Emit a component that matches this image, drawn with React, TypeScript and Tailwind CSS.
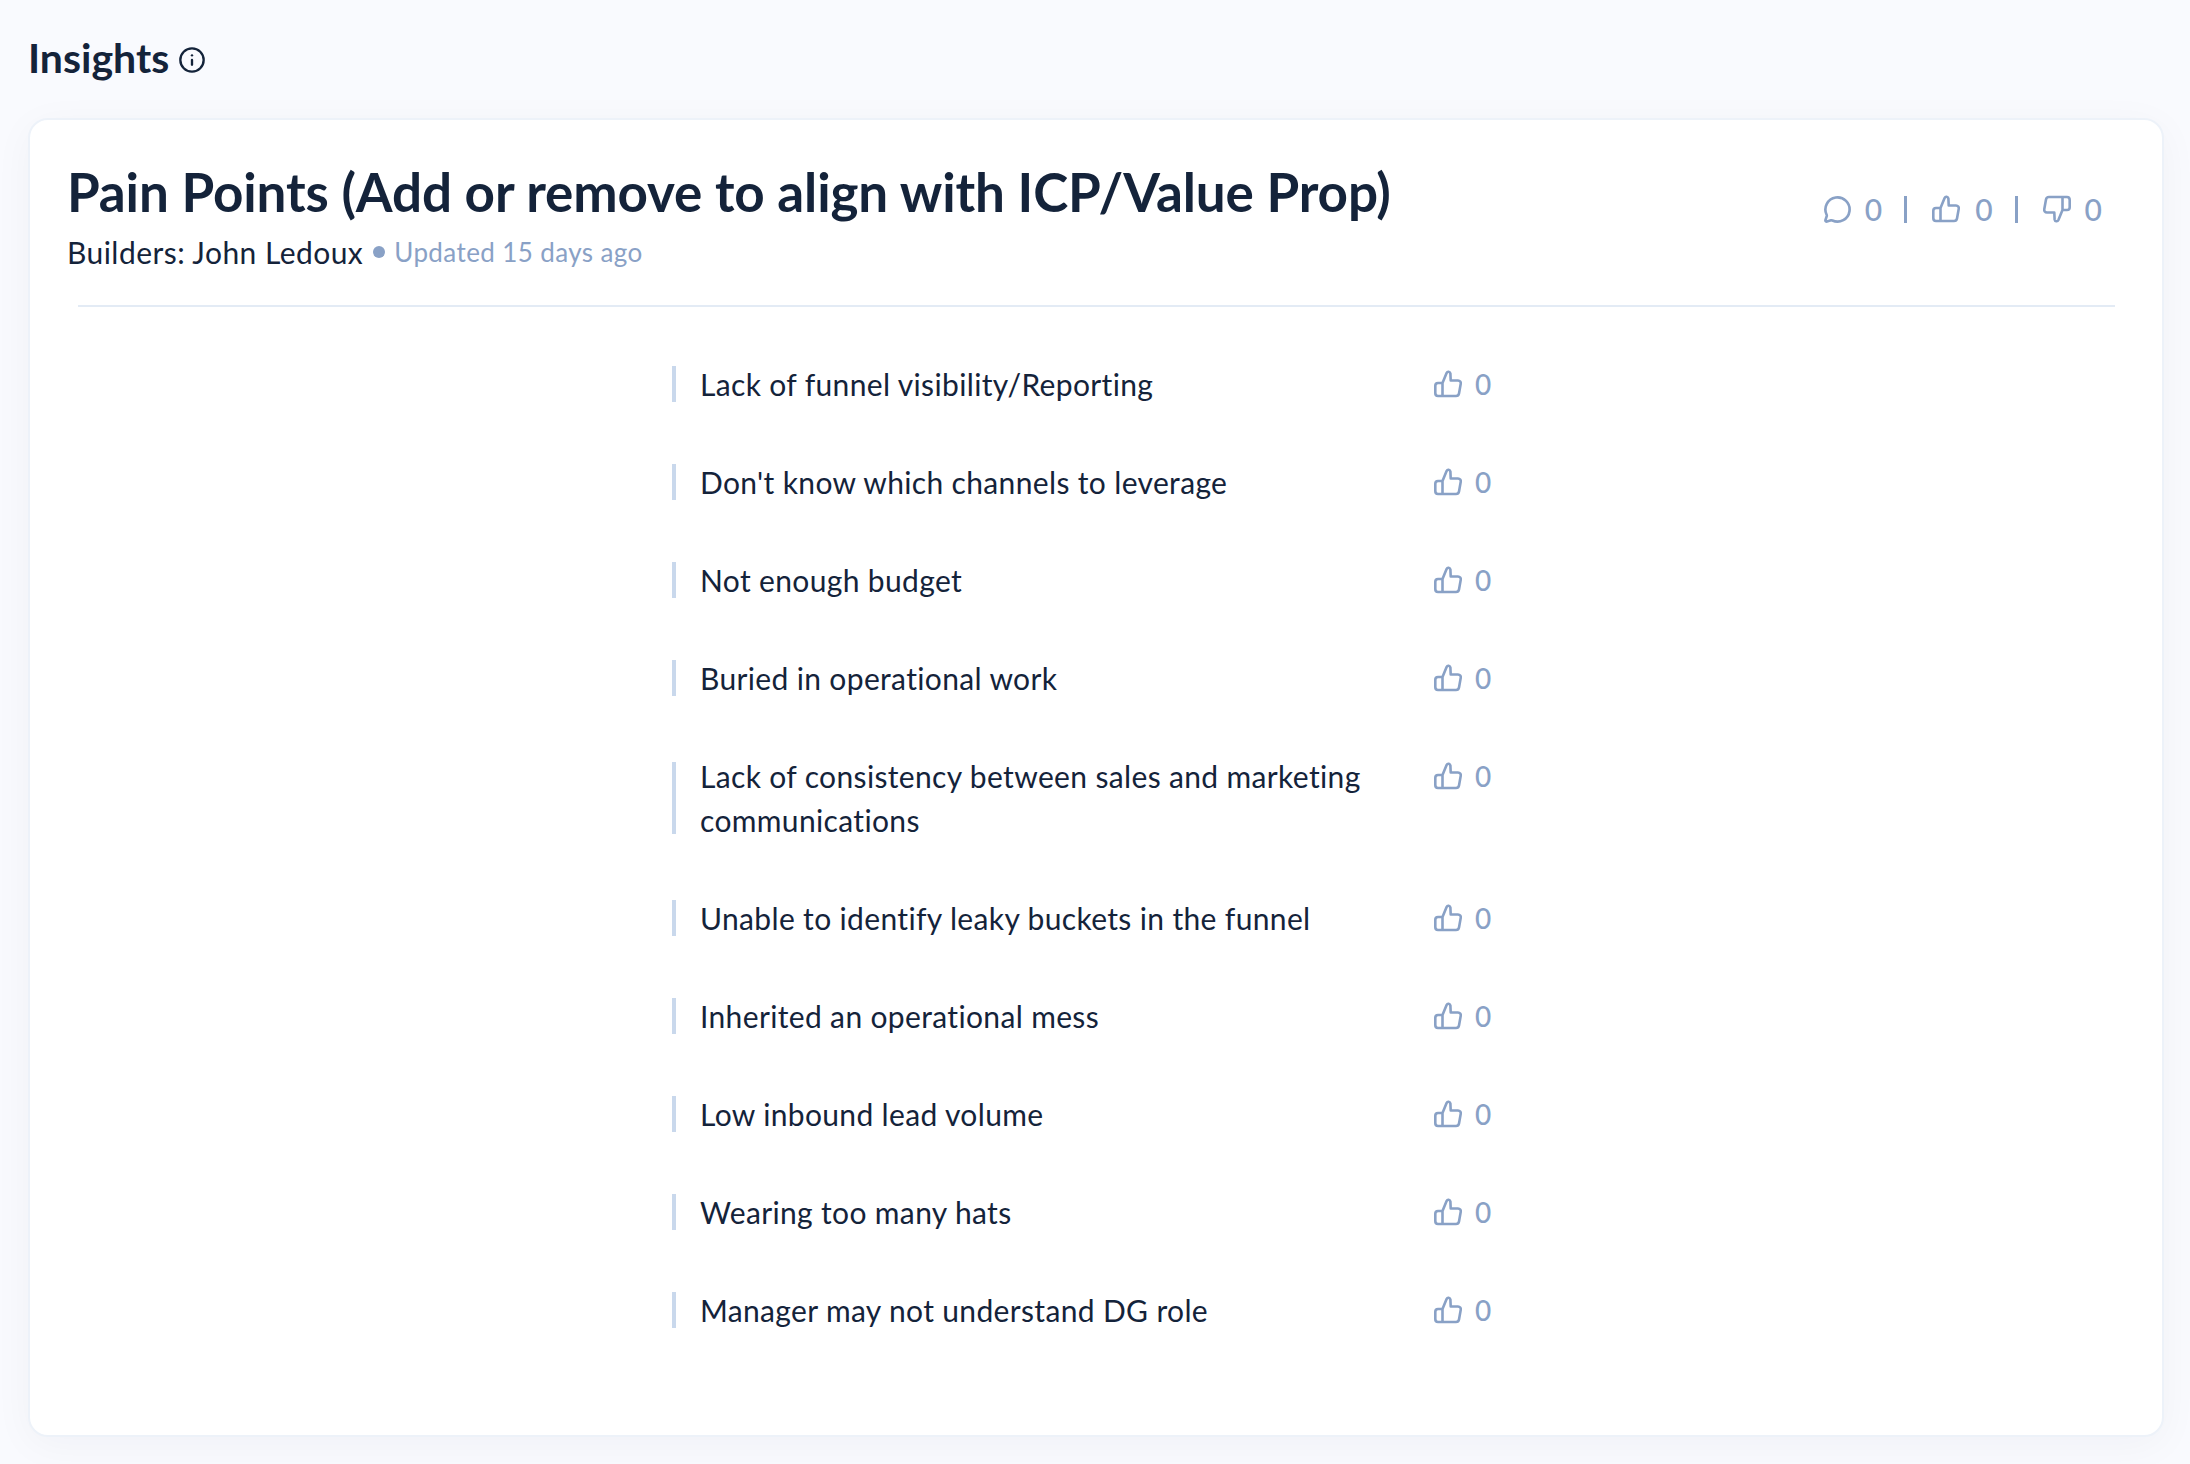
import React from "react";
import { MessageCircle, Info } from "lucide-react";

const items: { t: string; tall?: boolean }[] = [
  { t: "Lack of funnel visibility/Reporting" },
  { t: "Don't know which channels to leverage" },
  { t: "Not enough budget" },
  { t: "Buried in operational work" },
  { t: "Lack of consistency between sales and marketing communications", tall: true },
  { t: "Unable to identify leaky buckets in the funnel" },
  { t: "Inherited an operational mess" },
  { t: "Low inbound lead volume" },
  { t: "Wearing too many hats" },
  { t: "Manager may not understand DG role" },
];

function Thumb({ className }: { className?: string }) {
  return (
    <svg width="28" height="28" viewBox="0 0 28 28" fill="none" stroke="currentColor" strokeWidth="2.6" strokeLinecap="round" strokeLinejoin="round" className={className}>
      <path d="M8.5 13 L12.6 3 C13.5 1 16 1.4 16.4 3.6 L16.7 10.5 H24 C26 10.5 27.1 12 26.7 14 L25 23.5 C24.7 25.2 23.5 26 22 26 H4 C2.2 26 1.3 24.8 1.3 23 V15.8 C1.3 14 2.2 13 4 13 H8.5 V26" />
    </svg>
  );
}

function Row({ t, tall }: { t: string; tall?: boolean }) {
  return (
    <div className="flex w-[848px] items-start">
      <div className="flex w-[762px] items-center">
        <div className={tall ? "h-[72px] w-1 shrink-0 bg-[#c9d8ec]" : "h-9 w-1 shrink-0 bg-[#c9d8ec]"} />
        <span className="ml-[24px] w-[690px] text-[30px] leading-[44px] tracking-[0.35px] text-[#14233a]">{t}</span>
      </div>
      <div className="flex h-11 items-center text-[#89a1c6]">
        <Thumb />
        <span className="ml-[13px] text-[28px] font-medium leading-9">0</span>
      </div>
    </div>
  );
}

export default function App() {
  return (
    <div className="flex h-[1464px] flex-col overflow-hidden bg-[#f9fafe] pl-[28px] pr-[26px] pt-[32px] font-['Lato',sans-serif] [font-variant-ligatures:none]">
      <div className="flex h-[52px] items-center gap-[9px]">
        <h2 className="text-[41px] font-bold leading-[52px] text-[#14233a]">Insights</h2>
        <Info size={28} strokeWidth={2} className="mt-[3px] text-[#14233a]" />
      </div>
      <div className="mt-[34px] flex h-[1319px] flex-col rounded-[20px] border-2 border-[#edf2f9] bg-white shadow-[0_8px_40px_rgba(20,35,58,0.04)]">
        <div className="flex justify-between pl-[37px] pr-[60px] pt-[40px]">
          <div>
            <h1 className="text-[53px] font-bold leading-[64px] tracking-[-0.13px] text-[#14233a]">Pain Points (Add or remove to align with ICP/Value Prop)</h1>
            <div className="mt-[8px] flex items-center text-[30px] leading-10">
              <span className="tracking-[0.45px] text-[#14233a]">Builders: John Ledoux</span>
              <span className="ml-[10px] h-3 w-3 rounded-full bg-[#89a1c6]" />
              <span className="ml-[9px] text-[26px] tracking-[0.4px] text-[#89a1c6]">Updated 15 days ago</span>
            </div>
          </div>
          <div className="mt-[29px] flex h-10 items-center text-[30px] font-medium text-[#89a1c6]">
            <MessageCircle size={29} strokeWidth={2.2} />
            <span className="ml-[13px]">0</span>
            <span className="ml-[22px] h-[27px] w-[3px] bg-[#89a1c6]" />
            <Thumb className="ml-[25px]" />
            <span className="ml-[15px]">0</span>
            <span className="ml-[22px] h-[27px] w-[3px] bg-[#89a1c6]" />
            <Thumb className="ml-[25px] rotate-180" />
            <span className="ml-[14px]">0</span>
          </div>
        </div>
        <div className="ml-[48px] mr-[47px] mt-[33px] h-[2px] bg-[#e3ebf5]" />
        <div className="mt-[55px] flex flex-col items-center gap-[54px]">
          {items.map((i) => (
            <Row key={i.t} t={i.t} tall={i.tall} />
          ))}
        </div>
      </div>
    </div>
  );
}
